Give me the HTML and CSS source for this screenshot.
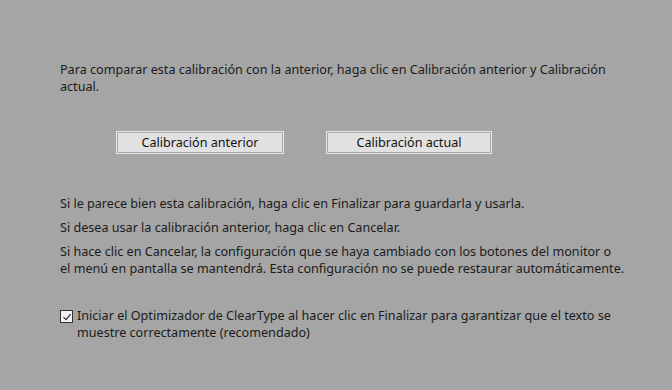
FILE: index.html
```html
<!DOCTYPE html>
<html lang="es">
<head>
    <meta charset="UTF-8">
    <title>Calibración del color de pantalla</title>
    <link rel="stylesheet" href="styles.css">
</head>
<body>

<div class="page">
    <p class="intro">Para comparar esta calibración con la anterior, haga clic en Calibración anterior y Calibración<br>actual.</p>

    <div class="buttons">
        <button type="button" class="btn btn-prev">Calibración anterior</button>
        <button type="button" class="btn btn-cur">Calibración actual</button>
    </div>

    <div class="notes">
        <p>Si le parece bien esta calibración, haga clic en Finalizar para guardarla y usarla.</p>
        <p>Si desea usar la calibración anterior, haga clic en Cancelar.</p>
        <p>Si hace clic en Cancelar, la configuración que se haya cambiado con los botones del monitor o<br>el menú en pantalla se mantendrá. Esta configuración no se puede restaurar automáticamente.</p>
    </div>

    <label class="check">
        <span class="box">
            <svg width="10" height="10" viewBox="0 0 10 10"><path d="M1.5 5.2 L4 7.6 L8.6 2.2" fill="none" stroke="#222" stroke-width="1.1"/></svg>
        </span>
        <span class="check-text">Iniciar el Optimizador de ClearType al hacer clic en Finalizar para garantizar que el texto se<br>muestre correctamente (recomendado)</span>
    </label>
</div>

</body>
</html>
```

FILE: styles.css
```css
html, body {
    margin: 0;
    background-color: #a5a5a5;
}
body {
    font-family: "Noto Sans", "Open Sans", sans-serif;
    font-size: 12.6px;
    line-height: 17px;
    color: #1b1b1b;
}
.page {
    padding: 61px 0 0 60px;
}
p {
    margin: 0;
    white-space: nowrap;
}
.buttons {
    display: flex;
    gap: 42px;
    margin: 36px 0 0 56px;
}
.btn {
    height: 23px;
    padding: 0 0 1px;
    font-family: inherit;
    font-size: 12.6px;
    color: #111;
    background-color: #e1e1e1;
    border: 1px solid #e6e6e6;
    box-shadow: inset 0 0 0 1px #a9a9a9;
}
.btn-prev {
    width: 168px;
}
.btn-cur {
    width: 166px;
}
.notes {
    margin-top: 41px;
    display: flex;
    flex-direction: column;
    gap: 7px;
}
.check {
    display: flex;
    align-items: flex-start;
    margin-top: 30px;
}
.box {
    width: 11px;
    height: 11px;
    margin: 3px 4px 0 0;
    border: 1px solid #333;
    background-color: #f2f2f2;
    display: flex;
    align-items: center;
    justify-content: center;
}
.check-text {
    white-space: nowrap;
}
```
